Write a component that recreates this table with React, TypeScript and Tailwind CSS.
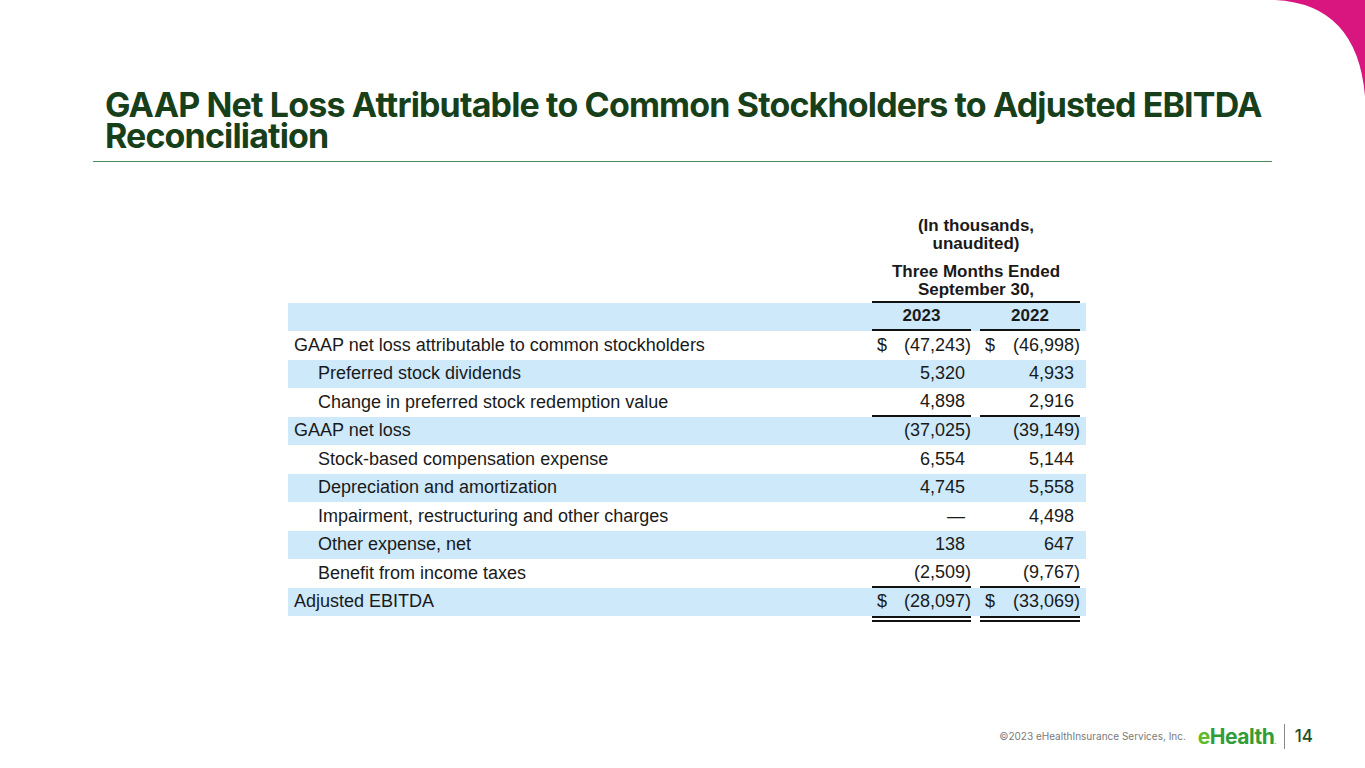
import React from "react";

type Row = {
    label: string;
    indent?: boolean;
    blue?: boolean;
    a: string;
    b: string;
    dollar?: boolean;
    line?: "single" | "double";
};

const rows: Row[] = [
    { label: "GAAP net loss attributable to common stockholders", a: "(47,243)", b: "(46,998)", dollar: true },
    { label: "Preferred stock dividends", indent: true, blue: true, a: "5,320", b: "4,933" },
    { label: "Change in preferred stock redemption value", indent: true, a: "4,898", b: "2,916", line: "single" },
    { label: "GAAP net loss", blue: true, a: "(37,025)", b: "(39,149)" },
    { label: "Stock-based compensation expense", indent: true, a: "6,554", b: "5,144" },
    { label: "Depreciation and amortization", indent: true, blue: true, a: "4,745", b: "5,558" },
    { label: "Impairment, restructuring and other charges", indent: true, a: "—", b: "4,498" },
    { label: "Other expense, net", indent: true, blue: true, a: "138", b: "647" },
    { label: "Benefit from income taxes", indent: true, a: "(2,509)", b: "(9,767)", line: "single" },
    { label: "Adjusted EBITDA", blue: true, a: "(28,097)", b: "(33,069)", dollar: true },
];

function Value({ value, dollar, line }: { value: string; dollar?: boolean; line?: "single" | "double" }) {
    const paren = value.endsWith(")");
    return (
        <div
            className={`flex h-full items-center justify-between ${line === "single" ? "border-b-2 border-[#111]" : ""}`}
        >
            <span className="pl-[5px]">{dollar ? "$" : ""}</span>
            <span>
                {value}
                {!paren && <span className="invisible">)</span>}
            </span>
        </div>
    );
}

function TableRow({ row }: { row: Row }) {
    return (
        <div className={`flex h-[28.5px] items-center ${row.blue ? "bg-[#cde9fa]" : ""}`}>
            <div className={`w-[584px] ${row.indent ? "pl-[30px]" : "pl-[6px]"}`}>{row.label}</div>
            <div className="h-full w-[99px]">
                <Value value={row.a} dollar={row.dollar} line={row.line} />
            </div>
            <div className="w-[9px]" />
            <div className="h-full w-[100px]">
                <Value value={row.b} dollar={row.dollar} line={row.line} />
            </div>
        </div>
    );
}

function Logo() {
    return (
        <div className="flex items-baseline font-['Inter',sans-serif] text-[21px] font-bold tracking-[-0.5px]">
            <span className="text-[#5cbc2c]">e</span>
            <span className="text-[#2f9d3a]">Health</span>
            <span className="text-[6px] text-[#2f9d3a]">.</span>
        </div>
    );
}

export default function App() {
    return (
        <div className="relative flex h-[768px] w-[1365px] flex-col overflow-hidden bg-white font-['Liberation_Sans',Arial,sans-serif] text-[#1a1a1a]">
            <svg className="absolute right-0 top-0" width="90" height="100" viewBox="0 0 90 100">
                <path d="M0 0 L90 0 L90 96 Q82 4 0 0 Z" fill="#d9157f" />
            </svg>

            <h1 className="pl-[105px] pt-[89px] font-['Inter',sans-serif] text-[34px] font-bold leading-[31px] tracking-[-0.85px] text-[#17401a]">
                GAAP Net Loss Attributable to Common Stockholders to Adjusted EBITDA
                <br />
                Reconciliation
            </h1>
            <div className="ml-[93px] mt-[10px] h-px w-[1179px] bg-[#4e8a5c]" />

            <div className="ml-[288px] mt-[55px] w-[798px] text-[18px]">
                <div className="ml-[584px] w-[208px] text-center text-[17px] font-bold leading-[17.5px]">
                    <div>(In thousands,</div>
                    <div>unaudited)</div>
                    <div className="mt-[11px]">Three Months Ended</div>
                    <div>September 30,</div>
                </div>
                <div className="ml-[584px] mt-[3px] h-[2px] w-[208px] bg-[#111]" />
                <div className="flex h-[28px] items-center bg-[#cde9fa] text-[17px] font-bold">
                    <div className="w-[584px]" />
                    <div className="flex h-full w-[99px] items-center justify-center border-b-2 border-[#111]">2023</div>
                    <div className="w-[9px]" />
                    <div className="flex h-full w-[100px] items-center justify-center border-b-2 border-[#111]">2022</div>
                </div>
                {rows.map((row) => (
                    <TableRow key={row.label} row={row} />
                ))}
                <div className="flex h-[7px]">
                    <div className="w-[584px]" />
                    <div className="w-[99px] border-t-[6px] border-double border-[#111]" />
                    <div className="w-[9px]" />
                    <div className="w-[100px] border-t-[6px] border-double border-[#111]" />
                </div>
            </div>

            <div className="mt-auto mb-[16px] flex items-center justify-end pr-[52px]">
                <span className="font-['Inter',sans-serif] text-[10px] text-[#7a7a7a]">
                    ©2023 eHealthInsurance Services, Inc.
                </span>
                <div className="ml-[12px]">
                    <Logo />
                </div>
                <div className="ml-[8px] h-[25px] w-px bg-[#888]" />
                <span className="ml-[10px] font-['Inter',sans-serif] text-[17px] font-medium text-[#1e4d1f]">14</span>
            </div>
        </div>
    );
}
